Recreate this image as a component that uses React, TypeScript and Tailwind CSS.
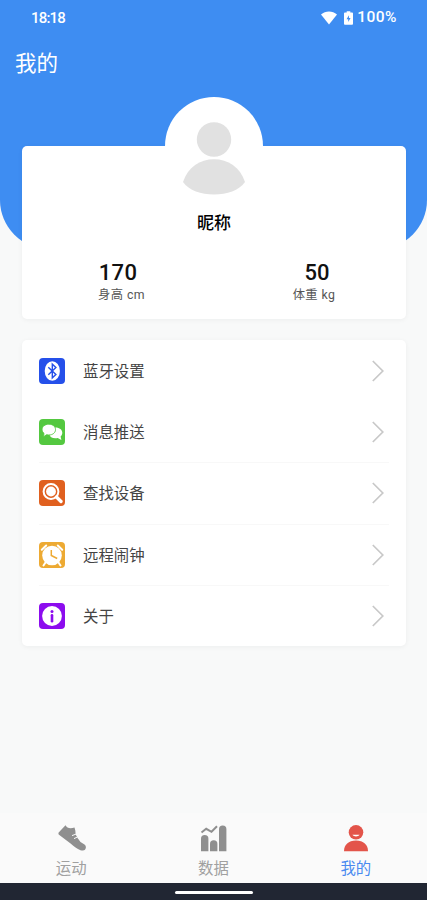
import React, { FC, ReactNode } from "react";

const BluetoothIcon: FC = () => (
  <svg viewBox="0 0 26 26" className="h-[26px] w-[26px]">
    <rect width="26" height="26" rx="4" fill="#2550ea" />
    <ellipse cx="13.3" cy="13" rx="7.6" ry="9.8" fill="#fff" />
    <path
      d="M9.3 9.3l7.6 7.2-3.6 3.3V6.2l3.6 3.3-7.6 7.2"
      fill="none"
      stroke="#2550ea"
      strokeWidth="1.4"
    />
  </svg>
);

const MessageIcon: FC = () => (
  <svg viewBox="0 0 26 26" className="h-[26px] w-[26px]">
    <rect width="26" height="26" rx="4" fill="#54c840" />
    <path
      d="M16 8.400c4.300-.2 7.300 2.100 7.300 5.400 0 1.500-.6 2.700-1.700 3.700l.8 3.400-3.700-1.900c-4.700.8-7.900-.9-8.300-3.600z"
      fill="#fff"
    />
    <path
      d="M9.800 5.200c4 0 6.700 2.300 6.700 5.400s-2.700 5.400-6.700 5.400c-.8 0-1.500-.1-2.200-.3l-3.100 2.100.5-3.500c-1.200-.9-1.900-2.200-1.900-3.700 0-3.100 2.700-5.400 6.700-5.400z"
      fill="#fff"
      stroke="#54c840"
      strokeWidth=".9"
    />
  </svg>
);

const SearchIcon: FC = () => (
  <svg viewBox="0 0 26 26" className="h-[26px] w-[26px]">
    <rect width="26" height="26" rx="4" fill="#e0601f" />
    <circle cx="12" cy="11.5" r="7.4" fill="none" stroke="#fff" strokeWidth="2" />
    <circle cx="12" cy="11.5" r="4.9" fill="#fff" />
    <path d="M17.500 17l4.500 4.500" stroke="#fff" strokeWidth="3.400" strokeLinecap="round" />
  </svg>
);

const AlarmIcon: FC = () => (
  <svg viewBox="0 0 26 26" className="h-[26px] w-[26px]">
    <rect width="26" height="26" rx="4" fill="#edaa33" />
    <circle cx="13" cy="13.5" r="9.8" fill="#fff" />
    <path
      d="M2.800 7.800l4.400-4.300M23.200 7.800l-4.400-4.300M6.500 20.500l-2 3M19.500 20.500l2 3"
      stroke="#fff"
      strokeWidth="2"
      strokeLinecap="round"
    />
    <path d="M12.300 8v5.500l5.900 3" fill="none" stroke="#edaa33" strokeWidth="1.500" />
  </svg>
);

const InfoIcon: FC = () => (
  <svg viewBox="0 0 26 26" className="h-[26px] w-[26px]">
    <rect width="26" height="26" rx="4" fill="#8c0cee" />
    <circle cx="13" cy="13" r="9.9" fill="#fff" />
    <circle cx="13" cy="8.5" r="1.5" fill="#8c0cee" />
    <path d="M13 12.300v6" stroke="#8c0cee" strokeWidth="2.600" strokeLinecap="round" />
  </svg>
);

const ShoeIcon: FC = () => (
  <svg viewBox="0 0 30 28" className="ml-[2px] h-7 w-[30px]" fill="#8f8f8f">
    <path d="M8.500 1.300c1.400 3 4.700 3.800 9 2.300l.8 3 .4 4 2 3.600 2.800 3.800 4 2.600c1.600 1.200 2 3.500.5 5.200-.9 1-2.800 1-4.500.4-3.500-1.300-6.500-3.500-9.600-6.400L2 10.800c-.8-1-.7-1.800-.1-2.600z" />
    <path
      d="M15 11.600l4-1.500M17 14.600l3.700-1.700"
      stroke="#fafafa"
      strokeWidth="1"
    />
  </svg>
);

const ChartIcon: FC = () => (
  <svg viewBox="0 0 28 28" className="ml-[2px] h-7 w-7" fill="#8f8f8f">
    <path d="M1 27.300V14.500q0-3.500 3.700-3.500t3.700 3.500v12.800z" />
    <path d="M10 27.300v-7.500q0-3.500 3.700-3.500t3.700 3.500v7.500z" />
    <path d="M19 27.300V5q0-3.500 3.700-3.500T26.400 5v22.300z" />
    <path
      d="M1.500 8.500l4.700-3.700 5.300 3L17 2.300"
      fill="none"
      stroke="#8f8f8f"
      strokeWidth="2"
    />
  </svg>
);

const UserIcon: FC = () => (
  <svg viewBox="0 0 26 28" className="h-7 w-[26px]" fill="#e3544a">
    <circle cx="13" cy="8.3" r="7.300" />
    <path d="M1 27.300c0-6.500 4.500-10.700 12-10.700s12 4.200 12 10.700z" />
    <path d="M9.400 10.800c1.700 2.200 5.500 2.200 7.200 0z" fill="#fff" />
  </svg>
);

type StatProps = {
  value: string;
  label: string;
  valueClass: string;
  labelClass: string;
};

const Stat: FC<StatProps> = ({ value, label, valueClass, labelClass }) => (
  <div className="flex w-[198px] flex-col items-center">
    <span
      className={`text-[22px] font-medium leading-[26px] text-[#111] ${valueClass}`}
    >
      {value}
    </span>
    <span className={`text-[12.3px] leading-[19px] text-[#555] ${labelClass}`}>
      {label}
    </span>
  </div>
);

const MenuRow: FC<{ icon: ReactNode; label: string; line: boolean }> = ({
  icon,
  label,
  line,
}) => (
  <div
    className={`flex h-[61.2px] items-center border-b ${
      line ? "border-[#f8f8f8]" : "border-transparent"
    }`}
  >
    {icon}
    <span className="ml-[18px] flex-1 pt-[3px] text-[15.4px] text-[#444]">{label}</span>
    <svg viewBox="0 0 12 22" className="mr-[5px] h-[22px] w-3" fill="none">
      <path d="M.8 1l10 10-10 10" stroke="#c8c8c8" strokeWidth="1.700" />
    </svg>
  </div>
);

const items = [
  { label: "蓝牙设置", icon: <BluetoothIcon />, line: false },
  { label: "消息推送", icon: <MessageIcon />, line: true },
  { label: "查找设备", icon: <SearchIcon />, line: true },
  { label: "远程闹钟", icon: <AlarmIcon />, line: true },
  { label: "关于", icon: <InfoIcon />, line: false },
];

const tabs = [
  { label: "运动", icon: <ShoeIcon />, color: "text-[#a0a0a0]" },
  { label: "数据", icon: <ChartIcon />, color: "text-[#a0a0a0]" },
  { label: "我的", icon: <UserIcon />, color: "text-[#4a8af0]" },
];

export default function App() {
  return (
    <div className="flex h-[900px] w-[427px] flex-col overflow-hidden bg-[#f8f9f9] font-[Roboto,'Noto_Sans_CJK_SC',sans-serif]">
      <header className="h-[249px] shrink-0 rounded-b-[49px] bg-[#3e8df2] text-white">
        <div className="flex h-[35px] items-center justify-between pl-[31px] pr-[30px] pt-px text-[15px] font-medium">
          <span className="tracking-[-0.8px]">18:18</span>
          <div className="flex items-center">
            <svg viewBox="0 0 16 14" className="h-[14px] w-4" fill="#fff">
              <path d="M0 3.500C4.500-.4 11.500-.4 16 3.500L8 13.500z" />
            </svg>
            <svg viewBox="0 0 10 15" className="ml-[7px] mr-1 h-[14px] w-[9px]">
              <path d="M3 0h4v1.500h2q1 0 1 1V14q0 1-1 1H1q-1 0-1-1V2.500q0-1 1-1h2z" fill="#fff" />
              <path d="M5.500 4.500L2.800 9h1.900v3l2.600-4.500H5.500z" fill="#3e8df2" />
            </svg>
            <span className="text-[15.5px] tracking-[0.5px]">100%</span>
          </div>
        </div>
        <h1 className="ml-[15px] mt-[13px] text-[21.5px] leading-8">我的</h1>
      </header>

      <section className="relative mx-[22px] mt-[-103px] flex h-[173px] w-[384px] shrink-0 flex-col items-center rounded-[5px] bg-white shadow-[0_1px_5px_rgba(0,40,40,0.05)]">
        <div className="-mt-[49px] flex h-[98px] w-[98px] shrink-0 justify-center rounded-full bg-white">
          <svg viewBox="0 0 62 73" className="mt-[25px] h-[73px] w-[62px] shrink-0" fill="#e1e1e1">
            <circle cx="31" cy="17.5" r="17.2" />
            <path d="M0 60C5 45 17 37.300 31 37.300S57 45 62 60c-6 8.500-18 12.500-31 12.500S6 68.500 0 60z" />
          </svg>
        </div>
        <h2 className="mt-[15px] text-[17px] font-medium leading-[26px] text-black">昵称</h2>
        <div className="mt-[24px] flex">
          <Stat
            value="170"
            label="身高 cm"
            valueClass="ml-[6px] tracking-[0.3px]"
            labelClass="ml-[13px] tracking-[0.4px]"
          />
          <Stat
            value="50"
            label="体重 kg"
            valueClass="ml-[8px]"
            labelClass="ml-[2px] tracking-[0.4px]"
          />
        </div>
      </section>

      <section className="mx-[22px] mt-[21px] h-[306px] w-[384px] shrink-0 rounded-[5px] bg-white px-[17px] pt-px shadow-[0_1px_5px_rgba(0,40,40,0.05)]">
        {items.map((item) => (
          <MenuRow key={item.label} {...item} />
        ))}
      </section>

      <nav className="mt-auto grid h-[70px] shrink-0 grid-cols-3 bg-[#fafafa]">
        {tabs.map((tab) => (
          <div key={tab.label} className={`flex flex-col items-center pt-[11px] ${tab.color}`}>
            {tab.icon}
            <span className="mt-[5px] text-[15.4px] leading-[24px]">{tab.label}</span>
          </div>
        ))}
      </nav>
      <footer className="flex h-[17px] shrink-0 items-center justify-center bg-[#212633] pt-[2px]">
        <div className="h-[3px] w-[78px] rounded-full bg-white" />
      </footer>
    </div>
  );
}
